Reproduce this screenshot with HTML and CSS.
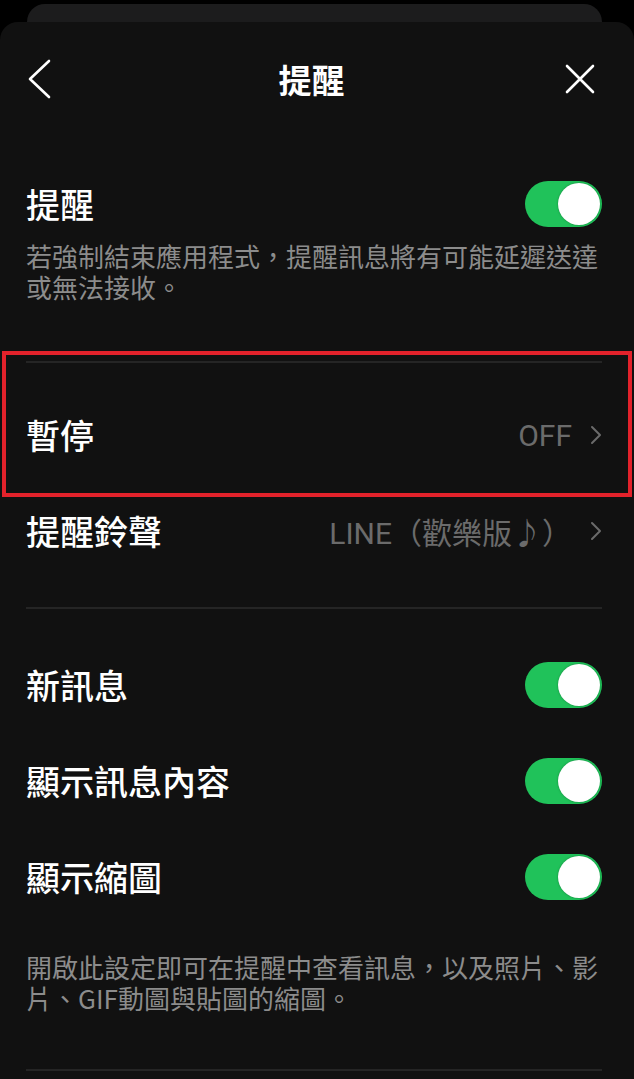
FILE: index.html
```html
<!DOCTYPE html>
<html lang="zh-Hant">
<head>
  <meta charset="UTF-8" />
  <title>提醒</title>
  <link rel="stylesheet" href="styles.css">
</head>
<body>
  <div class="screen">
    <div class="back-card"></div>

    <div class="sheet">
      <header class="topbar">
        <button class="icon-btn back">
          <svg width="24" height="40" viewBox="0 0 24 40"><path d="M22 2 L3 20 L22 38" fill="none" stroke="#fff" stroke-width="2.6" stroke-linecap="round" stroke-linejoin="round"/></svg>
        </button>
        <h1>提醒</h1>
        <button class="icon-btn close">
          <svg width="32" height="32" viewBox="0 0 32 32"><path d="M3 3 L29 29 M29 3 L3 29" fill="none" stroke="#fff" stroke-width="2.6" stroke-linecap="round"/></svg>
        </button>
      </header>

      <section class="group first">
        <div class="row short">
          <span class="label">提醒</span>
          <span class="toggle on"></span>
        </div>
        <p class="note">若強制結束應用程式，提醒訊息將有可能延遲送達或無法接收。</p>
      </section>

      <section class="group links">
        <div class="row">
          <span class="label">暫停</span>
          <span class="value">OFF
            <svg width="12" height="20" viewBox="0 0 12 20"><path d="M2 2 L10 10 L2 18" fill="none" stroke="#6b6b6b" stroke-width="2" stroke-linecap="round" stroke-linejoin="round"/></svg>
          </span>
        </div>
        <div class="row">
          <span class="label">提醒鈴聲</span>
          <span class="value">LINE（歡樂版♪）
            <svg width="12" height="20" viewBox="0 0 12 20"><path d="M2 2 L10 10 L2 18" fill="none" stroke="#6b6b6b" stroke-width="2" stroke-linecap="round" stroke-linejoin="round"/></svg>
          </span>
        </div>
      </section>

      <section class="group toggles">
        <div class="row">
          <span class="label">新訊息</span>
          <span class="toggle on"></span>
        </div>
        <div class="row">
          <span class="label">顯示訊息內容</span>
          <span class="toggle on"></span>
        </div>
        <div class="row">
          <span class="label">顯示縮圖</span>
          <span class="toggle on"></span>
        </div>
        <p class="note">開啟此設定即可在提醒中查看訊息，以及照片、影片、GIF動圖與貼圖的縮圖。</p>
      </section>

      <section class="group"></section>
    </div>

    <div class="highlight"></div>
  </div>
</body>
</html>
```

FILE: styles.css
```css
body {
  margin: 0;
  background: #000;
  font-family: "Noto Sans CJK TC", "Noto Sans", sans-serif;
  color: #fff;
}

.screen {
  position: relative;
  width: 634px;
  height: 1079px;
  overflow: hidden;
}

.back-card {
  margin: 4px 32px 0 27px;
  height: 40px;
  background-color: #1c1c1d;
  border-radius: 18px 18px 0 0;
}

.sheet {
  margin-top: -22px;
  height: 1100px;
  background-color: #111111;
  border-radius: 18px 18px 0 0;
  padding: 0 32px 0 26px;
}

.topbar {
  height: 114px;
  padding-bottom: 2px;
  display: flex;
  align-items: center;
  justify-content: space-between;
}

.topbar h1 {
  margin: 0;
  font-size: 33px;
  font-weight: 700;
  line-height: 1;
}

.icon-btn {
  background: transparent;
  border: none;
  padding: 0;
  display: flex;
  cursor: pointer;
}

.icon-btn.back {
  margin-left: 1px;
  width: 32px;
}

.icon-btn.close {
  margin-right: 6px;
}

.group {
  border-top: 2px solid #252525;
}

.group.first {
  border-top: none;
  padding: 30px 0 59px;
}

.group.links {
  padding: 24px 0 28px;
}

.group.toggles {
  padding: 28px 0 56px;
}

.row {
  height: 96px;
  display: flex;
  align-items: center;
  justify-content: space-between;
}

.row.short {
  height: 72px;
}

.label {
  font-size: 34px;
  font-weight: 500;
  line-height: 1;
}

.value {
  display: flex;
  align-items: center;
  gap: 18px;
  font-family: Roboto, "Noto Sans CJK TC", sans-serif;
  font-size: 30px;
  color: #6b6b6b;
}

.note {
  margin: 0;
  font-size: 26px;
  line-height: 31px;
  color: #8c8c8c;
}

.group.toggles .note {
  margin-top: 26px;
}

.toggle {
  position: relative;
  width: 77px;
  height: 46px;
  border-radius: 23px;
  background-color: #2a2a2a;
  flex-shrink: 0;
}

.toggle.on {
  background-color: #20c25a;
}

.toggle::after {
  content: "";
  position: absolute;
  top: 2px;
  right: 2px;
  width: 42px;
  height: 42px;
  border-radius: 50%;
  background-color: #fff;
  box-shadow: 0 0 2px rgba(0, 80, 30, 0.6);
}

.highlight {
  position: absolute;
  top: 351px;
  left: 2px;
  width: 622px;
  height: 138px;
  border: 4px solid #e3222b;
}
```
